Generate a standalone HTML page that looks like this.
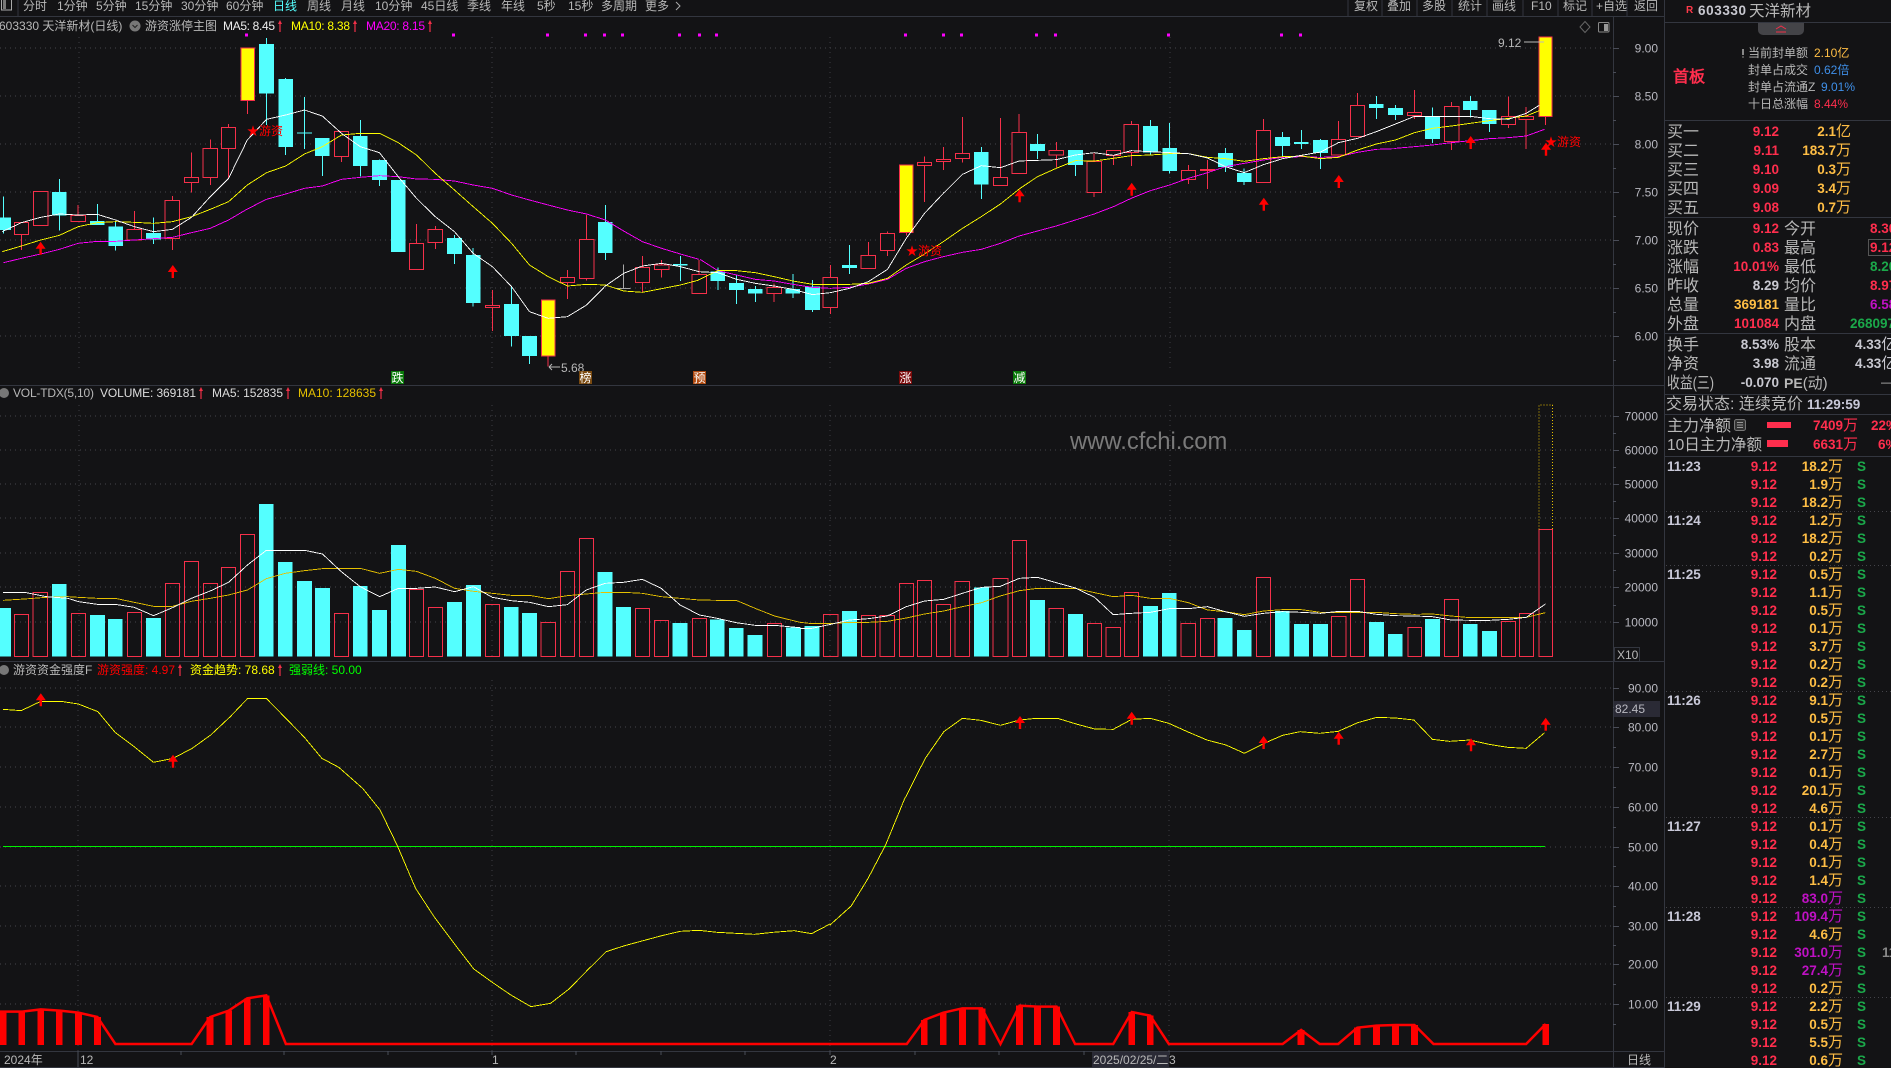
<!DOCTYPE html>
<html><head><meta charset="utf-8"><style>
html,body{margin:0;padding:0;background:#131315;overflow:hidden}
svg{display:block;font-family:"Liberation Sans","WenQuanYi Zen Hei",sans-serif;font-size:12px}
.ns{vector-effect:non-scaling-stroke}
polyline.ns{stroke-width:.9}
polyline.ns.h{stroke-width:2.5}
.n{fill:#b8b8b8}
.a{fill:#b8b8c0;text-anchor:end}
.p{fill:#ff2e4d;font-weight:bold;font-size:13.5px;text-anchor:end}
.v{fill:#ffbe45;font-weight:bold;font-size:13.5px;text-anchor:end}
.m{fill:#bf11c4;font-weight:bold;font-size:13.5px;text-anchor:end}
.w{font-size:15px;font-weight:normal}
.s{fill:#1ba84a;font-weight:bold;font-size:13.5px}
.t{fill:#c8c8d8;font-weight:bold;font-size:13.5px}
.l{fill:#b8b8b8;font-size:16px}
.g{fill:#c8c8d0;font-weight:bold;font-size:13.5px;text-anchor:end}
.e{fill:#1ba84a;font-weight:bold;font-size:13.5px;text-anchor:end}
</style></head><body>
<svg width="1891" height="1068" viewBox="0 0 1891 1068" xmlns="http://www.w3.org/2000/svg">
<defs>
<path id="ar" d="M0 0L5 7H1.2V13H-1.2V7H-5z" fill="#f00"/>
<path id="ta" d="M0 0L2 4H.6V12H-.6V4H-2z" fill="#f03048"/>
</defs>
<rect width="1891" height="1068" fill="#131315"/>

<!-- grid -->
<path d="M0 48H1613M0 96H1613M0 144H1613M0 192H1613M0 240H1613M0 288H1613M0 336H1613M0 416H1613M0 450H1613M0 484H1613M0 518H1613M0 553H1613M0 587H1613M0 622H1613M0 688H1613M0 727H1613M0 767H1613M0 807H1613M0 847H1613M0 886H1613M0 926H1613M0 964H1613M0 1004H1613" stroke="#44444a" stroke-dasharray="1 4" fill="none"/>
<path d="M79 37V370M492 37V370M830 37V370M1170 37V370M79 405V657M492 405V657M830 405V657M1170 405V657M78 680V1051M492 680V1051M830 680V1051M1169 680V1051" stroke="#3c3c42" stroke-dasharray="1 4" fill="none"/>

<!-- magenta dots -->
<path d="M245 33.5h3v3h-3zM452 33.5h3v3h-3zM546 33.5h3v3h-3zM584 33.5h3v3h-3zM603 33.5h3v3h-3zM621 33.5h3v3h-3zM678 33.5h3v3h-3zM698 33.5h3v3h-3zM715 33.5h3v3h-3zM904 33.5h3v3h-3zM942 33.5h3v3h-3zM960 33.5h3v3h-3zM1035 33.5h3v3h-3zM1054 33.5h3v3h-3zM1167 33.5h3v3h-3zM1280 33.5h3v3h-3zM1299 33.5h3v3h-3z" fill="#f0f" shape-rendering="crispEdges"/>

<!-- candles A -->
<g transform="scale(.44643,.33333)" fill="none" shape-rendering="crispEdges">
<path class="ns" stroke="#54ffff" d="M8 590V700M133 537V692M218 612V675M259 665V752M344 652V732M597 114V375M640 234V465M682 291V447M722 414V528M807 360V530M850 478V558M1018 705V792M1060 744V920M1146 860V1040M1186 1068V1092M1356 615V780M1524 768V843"/>
<path stroke="#54ffff" stroke-width="33" d="M8 652V690M133 576V646M218 663V675M259 679V738M344 699V719M597 132V281M640 237V441M682 397V401M722 414V468M807 408V498M850 480V540M892 540V756M1018 714V762M1060 765V909M1146 912V1008M1186 1008V1068M1356 666V759M1524 792V797"/>
<path class="ns" stroke="#f5304a" d="M48 703V750M175 615V647M301 633V688M386 588V750M429 457V578M471 418V555M512 372V535M554 302V342M765 470V486M933 672V730M975 678V747M1103 870V993M1228 1068V1100M1271 810V897M1314 645V842M1439 768V878M1482 780V832M1566 780V823"/>
<path class="ns" fill="#131315" stroke="#f5304a" d="M32 667H64V703H32zM75 574H107V677H75zM159 647H191V665H159zM285 688H317V720H285zM370 601H402V716H370zM413 532H445V548H413zM455 445H487V533H455zM496 382H528V446H496zM749 394H781V470H749zM917 730H949V809H917zM959 688H991V728H959zM1087 916H1119V922H1087zM1255 832H1287V848H1255zM1298 718H1330V836H1298zM1423 802H1455V848H1423zM1466 795H1498V809H1466zM1550 823H1582V881H1550z"/>
<path class="ns" stroke="#a8a8a8" d="M1397 793V865M1380 865H1412"/>
<path class="ns" fill="#ff0" stroke="#f5304a" d="M540 144H570V302H540zM1213 900H1243V1068H1213z"/>
<polyline class="ns" stroke="#f0f" points="8,788 48,775 91,762 133,748 175,730 218,724 259,724 301,720 344,716 386,712 429,698 471,685 512,660 554,627 597,598 640,582 682,565 722,558 765,538 807,532 850,527 892,530 933,537 975,538 1018,543 1060,555 1103,565 1146,585 1186,600 1228,615 1271,630 1314,642 1356,660 1397,693 1439,725 1482,745 1524,762 1566,778"/>
<polyline class="ns" stroke="#ff0" points="5,755 48,738 91,720 133,706 175,680 218,668 259,665 301,667 344,670 386,665 429,650 471,628 512,605 554,555 597,518 640,498 682,462 722,440 765,405 807,400 850,400 892,428 933,465 975,520 1018,570 1060,620 1103,670 1146,730 1186,795 1228,830 1271,858 1314,853 1356,855 1397,873 1439,877 1482,866 1524,855 1566,840"/>
<polyline class="ns" stroke="#fff" points="5,695 48,668 91,652 133,642 175,645 218,643 259,660 301,680 344,695 386,688 429,652 471,590 512,535 554,420 597,358 640,345 682,330 722,348 765,400 807,440 850,458 892,530 933,595 975,650 1018,695 1060,760 1103,800 1146,860 1186,935 1228,955 1271,950 1314,915 1356,858 1397,820 1439,798 1482,790 1524,800 1566,815"/>
</g>

<!-- candles B -->
<g transform="translate(700,0) scale(.44643,.33333)" fill="none" shape-rendering="crispEdges">
<path class="ns" stroke="#54ffff" d="M40 803V870M82 825V912M124 858V906M208 822V894M252 840V936M335 735V822M630 441V597M756 402V477M841 450V528M1009 360V465M1052 369V521M1177 444V516M1219 505V555M1305 396V468M1347 390V447M1390 417V507M1515 288V357M1558 315V360"/>
<path stroke="#54ffff" stroke-width="33" d="M40 814V843M82 849V870M124 867V881M208 867V881M252 860V930M335 795V804M630 456V554M756 432V453M841 450V495M1009 378V458M1052 444V513M1177 459V501M1219 519V546M1305 411V438M1347 426V432M1390 420V459M1515 312V324M1558 324V345"/>
<path class="ns" stroke="#f5304a" d="M166 850V862M166 881V906M292 795V942M377 726V766M420 694V768M462 698V707M503 470V606M545 441V510M588 351V488M673 354V532M715 342V397M798 426V503M883 458V591M926 451V495M966 363V498M1094 495V552M1137 480V567M1262 357V391M1430 363V418M1473 279V316"/>
<path class="ns" fill="#131315" stroke="#f5304a" d="M150 862H182V881H150zM276 832H308V922H276zM361 766H393V806H361zM404 700H436V752H404zM487 487H519V497H487zM530 478H561V485H530zM572 460H604V476H572zM657 532H689V557H657zM699 397H731V521H699zM782 451H814V465H782zM867 485H899V578H867zM910 451H942V467H910zM950 373H982V458H950zM1078 511H1110V539H1078zM1246 391H1278V548H1246zM1414 418H1446V465H1414zM1457 316H1489V410H1457z"/>
<path class="ns" fill="#f5304a" stroke="#f5304a" d="M1121 508H1153V512H1121z"/>
<path class="ns" fill="#ff0" stroke="#f5304a" d="M447 495H477V698H447z"/>
<polyline class="ns" stroke="#f0f" points="0,778 40,812 82,825 124,838 166,843 208,853 252,862 292,865 335,862 377,852 420,838 462,805 503,785 545,770 588,757 630,748 673,730 715,708 756,693 798,678 841,660 883,642 926,620 966,595 1009,572 1052,555 1094,535 1137,518 1177,500 1219,490 1262,480 1305,472 1347,470 1390,472 1430,470 1473,457 1515,448 1558,446"/>
<polyline class="ns" stroke="#ff0" points="-4,840 40,812 82,812 124,818 166,830 208,843 252,853 292,853 335,853 377,850 420,835 462,795 503,762 545,725 588,685 630,650 673,612 715,567 756,530 798,505 841,482 883,483 926,475 966,467 1009,465 1052,461 1094,461 1137,472 1177,476 1219,484 1262,476 1305,470 1347,468 1390,476 1430,472 1473,450 1515,432 1558,420"/>
<polyline class="ns" stroke="#fff" points="-4,815 40,818 82,838 124,850 166,858 208,868 252,884 292,878 335,865 377,845 420,808 462,715 503,640 545,580 588,523 630,497 673,503 715,483 756,481 798,479 841,465 883,458 926,466 966,452 1009,455 1052,458 1094,461 1137,474 1177,500 1219,518 1262,494 1305,476 1347,466 1390,456 1430,428 1473,415 1515,395 1558,372"/>
</g>

<!-- candles C -->
<g transform="translate(1340,0) scale(.35137,.33333)" fill="none" shape-rendering="crispEdges">
<path class="ns" stroke="#54ffff" d="M263 323V429M371 288V353M425 330V396"/>
<path stroke="#54ffff" stroke-width="42" d="M263 350V417M371 303V330M425 330V372"/>
<path class="ns" stroke="#f5304a" d="M212 270V357M317 306V450M479 290V384M530 321V447M585 350V375"/>
<path class="ns" fill="#131315" stroke="#f5304a" d="M192 337H232V347H192zM297 319H338V425H297zM459 349H500V374H459zM510 349H551V358H510z"/>
<path class="ns" fill="#ff0" stroke="#f5304a" d="M566 111H604V350H566z"/>
<polyline class="ns" stroke="#f0f" points="158,445 212,440 263,435 317,428 371,422 425,416 479,413 530,408 582,388"/>
<polyline class="ns" stroke="#ff0" points="158,420 212,398 263,385 317,378 371,370 425,362 479,355 530,348 567,332"/>
<polyline class="ns" stroke="#fff" points="158,372 212,349 263,349 317,349 371,349 425,356 479,358 530,340 567,316"/>
</g>

<!-- arrows pane 1 -->
<use href="#ar" x="40.6" y="241.7"/><use href="#ar" x="172.8" y="265"/><use href="#ar" x="1019.6" y="189.3"/><use href="#ar" x="1131.7" y="182.7"/><use href="#ar" x="1263.8" y="197.7"/><use href="#ar" x="1338.8" y="175"/><use href="#ar" x="1470.7" y="136"/><use href="#ar" x="1546" y="142.7"/>

<!-- star labels -->
<text x="247" y="135" fill="#f00" font-size="12">★游资</text>
<text x="906" y="255" fill="#f00" font-size="12">★游资</text>
<text x="1545" y="146" fill="#f00" font-size="12">★游资</text>

<!-- hi/lo -->
<text x="1498" y="47" class="n">9.12</text><path d="M1524 42H1544" stroke="#b8b8b8" fill="none"/>
<text x="561" y="372" class="n">5.68</text><path d="M549 367H560M549 367l3-3M549 367l3 3" stroke="#b8b8b8" fill="none"/>

<!-- event labels -->
<rect x="391" y="371" width="13" height="13" fill="#0a7a0a"/><text x="391.5" y="382" fill="#fff">跌</text>
<rect x="579" y="371" width="13" height="13" fill="#7a4a10"/><text x="579.5" y="382" fill="#fff">榜</text>
<rect x="693" y="371" width="13" height="13" fill="#b04a10"/><text x="693.5" y="382" fill="#fff">预</text>
<rect x="899" y="371" width="13" height="13" fill="#7a0a0a"/><text x="899.5" y="382" fill="#fff">涨</text>
<rect x="1013" y="371" width="13" height="13" fill="#0a7a0a"/><text x="1013.5" y="382" fill="#fff">减</text>

<!-- volume -->
<g transform="translate(0,380) scale(.5102,.33333)" fill="none" shape-rendering="crispEdges">
<path stroke="#54ffff" stroke-width="29" d="M7 684V830M116 612V830M191 705V830M226 717V830M301 714V830M522 372V830M559 546V830M597 603V830M632 624V830M706 618V830M744 690V830M781 495V830M891 666V830M928 615V830M1002 681V830M1038 699V830M1186 576V830M1222 681V830M1333 729V830M1406 719V830M1443 744V830M1480 765V830M1555 742V830"/>
<path class="ns" stroke="#f5304a" d="M28 703H56V830H28zM65 637H93V830H65zM140 700H168V830H140zM250 697H277V830H250zM324 610H352V830H324zM362 544H389V830H362zM399 610H426V830H399zM434 562H462V830H434zM471 463H499V830H471zM656 700H683V830H656zM803 628H830V830H803zM840 682H867V830H840zM952 673H979V830H952zM1060 727H1089V830H1060zM1099 574H1126V830H1099zM1136 475H1163V830H1136zM1246 685H1273V830H1246zM1283 721H1310V830H1283zM1357 715H1385V830H1357zM1504 730H1532V830H1504z"/>
<polyline class="ns" stroke="#e6c000" points="6,661 48,657 91,652 133,650 154,652 191,655 226,655 263,667 301,679 338,679 375,664 412,655 448,645 485,630 522,596 559,580 597,572 632,566 669,566 706,565 744,580 781,568 816,574 853,595 891,625 928,634 965,640 1002,646 1038,646 1075,656 1112,647 1149,642 1186,637 1222,637 1259,640 1296,650 1333,655 1371,660 1406,661 1443,661 1480,685 1518,708 1568,727"/>
<polyline class="ns" stroke="#fff" points="6,637 48,637 91,650 133,655 154,665 191,673 226,673 263,682 301,707 338,683 375,655 412,633 448,607 485,555 522,511 559,511 597,511 632,522 669,575 706,620 744,650 781,625 816,625 853,621 891,635 928,620 965,652 1002,662 1038,667 1075,680 1112,674 1149,630 1186,610 1222,607 1259,598 1296,625 1333,675 1371,705 1406,715 1443,728 1480,736 1518,736 1568,743"/>
</g>
<g transform="translate(800,380) scale(.54855,.33333)" fill="none" shape-rendering="crispEdges">
<path stroke="#54ffff" stroke-width="27" d="M22 738V830M90 693V830M331 622V830M433 660V830M502 702V830M639 678V830M673 639V830M775 714V830M810 750V830M879 693V830M914 732V830M949 732V830M1051 726V830M1085 762V830M1153 717V830M1222 732V830M1257 753V830"/>
<path class="ns" stroke="#f5304a" d="M43 703H69V830H43zM112 706H138V830H112zM146 706H172V830H146zM181 610H207V830H181zM214 601H240V830H214zM249 673H274V830H249zM283 604H309V830H283zM352 595H379V830H352zM387 482H413V830H387zM454 685H480V830H454zM524 730H550V830H524zM558 742H584V830H558zM592 637H617V830H592zM695 730H721V830H695zM730 715H756V830H730zM832 592H858V830H832zM969 709H995V830H969zM1004 598H1029V830H1004zM1108 742H1133V830H1108zM1175 658H1200V830H1175zM1279 724H1304V830H1279zM1312 700H1337V830H1312zM1347 448H1372V830H1347z"/>
<path class="ns" stroke="#e6c000" stroke-dasharray="1 2" d="M1347 448V75H1372V448"/>
<polyline class="ns" stroke="#e6c000" points="0,727 22,731 56,731 90,727 125,727 159,724 194,714 227,702 262,693 296,680 331,668 365,648 400,632 433,625 467,625 502,625 537,638 571,650 604,646 639,655 673,655 708,668 743,690 775,695 810,704 845,693 879,689 914,689 949,697 982,697 1016,697 1051,697 1085,701 1120,703 1153,702 1187,708 1222,713 1257,713 1291,713 1324,712 1359,698"/>
<polyline class="ns" stroke="#fff" points="0,745 22,745 56,733 90,720 125,716 159,708 194,680 227,663 262,658 296,640 331,622 365,619 400,595 433,592 467,608 502,624 537,652 571,704 604,700 639,697 673,686 708,686 743,680 775,695 810,709 845,700 879,695 914,697 949,700 982,694 1016,694 1051,703 1085,707 1120,708 1153,710 1187,720 1222,721 1257,721 1291,718 1324,712 1359,672"/>
</g>
<text x="1070" y="449" fill="#7a7a7a" font-size="23.8" font-family="Liberation Sans">www.cfchi.com</text>

<!-- indicator -->
<path d="M3 846.5H1545" stroke="#00f000" fill="none" shape-rendering="crispEdges"/>
<g transform="translate(0,660) scale(.52938,.33333)" fill="none" shape-rendering="crispEdges">
<polyline class="ns" stroke="#ff0" points="6,148 40,152 77,124 115,124 148,132 185,155 218,218 255,262 290,307 327,295 363,265 398,225 435,170 468,115 503,115 540,175 575,232 608,295 640,322 685,385 718,450 750,555 785,685 820,770 860,855 895,927 930,967 965,1005 1003,1040 1040,1030 1075,987 1110,930 1145,875 1180,857 1215,842 1250,827 1285,814 1320,811 1355,817 1390,820 1425,823 1460,817 1500,812 1533,821 1568,792"/>
</g>
<g transform="translate(830,660) scale(.52938,.33333)" fill="none" shape-rendering="crispEdges">
<polyline class="ns" stroke="#ff0" points="0,795 40,738 72,655 105,555 140,420 180,295 215,215 250,175 285,181 322,196 358,180 390,175 430,175 465,192 500,207 535,208 570,178 605,175 640,190 675,215 712,240 748,255 783,280 820,250 855,226 888,215 925,220 960,214 997,188 1033,172 1068,174 1103,180 1138,238 1170,244 1208,240 1245,253 1280,262 1315,265 1350,218"/>
</g>
<g transform="translate(0,660) scale(.52938,.33333)" fill="none">
<polyline class="ns h" stroke="#f00" points="0,1055 42,1055 77,1048 113,1052 148,1058 184,1071 218,1152 362,1152 397,1071 432,1052 467,1015 503,1006 540,1152 1568,1152"/>
<path stroke="#f00" stroke-width="13" shape-rendering="crispEdges" d="M6 1055V1155M41 1055V1155M77 1048V1155M112 1052V1155M148 1058V1155M184 1071V1155M397 1071V1155M432 1052V1155M467 1015V1155M503 1006V1155"/>
</g>
<g transform="translate(830,660) scale(.52938,.33333)" fill="none">
<polyline class="ns h" stroke="#f00" points="0,1152 145,1152 178,1080 214,1058 250,1045 287,1045 322,1152 358,1037 392,1040 428,1040 463,1152 535,1152 570,1056 605,1067 640,1152 855,1152 890,1110 925,1152 960,1152 996,1103 1032,1097 1068,1095 1104,1095 1140,1152 1315,1152 1352,1092"/>
<path stroke="#f00" stroke-width="13" shape-rendering="crispEdges" d="M178 1080V1155M214 1058V1155M250 1045V1155M287 1045V1155M358 1037V1155M392 1040V1155M428 1040V1155M570 1056V1155M605 1067V1155M890 1110V1155M996 1103V1155M1032 1097V1155M1068 1095V1155M1104 1095V1155M1352 1092V1155"/>
</g>
<use href="#ar" x="40.8" y="693.3"/><use href="#ar" x="173" y="754.7"/><use href="#ar" x="1020" y="716"/><use href="#ar" x="1131.7" y="711.7"/><use href="#ar" x="1263.6" y="736"/><use href="#ar" x="1338.7" y="731.7"/><use href="#ar" x="1471" y="738.3"/><use href="#ar" x="1545.7" y="717.7"/>

<!-- structural lines -->
<g stroke="#33363f" fill="none" shape-rendering="crispEdges">
<path d="M0 16.5H1664M0 385.5H1664M0 661.5H1664M0 1051.5H1664M0 1067.5H1664"/>
<path d="M1613.5 16V1068M1664.5 0V1068"/>
<path d="M1665 22.5H1891M1665 120.5H1891M1665 217.5H1891M1665 333.5H1891M1665 394.5H1891M1665 414.5H1891M1665 456.5H1891"/>
<path d="M18 0V16M1348 0V16M1382 0V16M1417 0V16M1452 0V16M1487 0V16M1523 0V16M1558 0V16M1592 0V16M1627 0V16"/>
</g>
<path d="M1666 511.5H1891M1666 565.5H1891M1666 691.5H1891M1666 817.5H1891M1666 907.5H1891M1666 997.5H1891" stroke="#44444a" stroke-dasharray="1 3" fill="none" shape-rendering="crispEdges"/>
<g stroke="#4a4d58" fill="none" shape-rendering="crispEdges">
<path d="M1613 48.5h6M1613 96.5h6M1613 144.5h6M1613 192.5h6M1613 240.5h6M1613 288.5h6M1613 336.5h6M1613 72.5h3M1613 120.5h3M1613 168.5h3M1613 216.5h3M1613 264.5h3M1613 312.5h3M1613 360.5h3"/>
<path d="M1613 416.5h6M1613 450.5h6M1613 484.5h6M1613 518.5h6M1613 553.5h6M1613 587.5h6M1613 622.5h6M1613 433.5h3M1613 467.5h3M1613 501.5h3M1613 535.5h3M1613 570.5h3M1613 605.5h3"/>
<path d="M1613 688.5h6M1613 727.5h6M1613 767.5h6M1613 807.5h6M1613 847.5h6M1613 886.5h6M1613 926.5h6M1613 964.5h6M1613 1004.5h6M1613 707.5h3M1613 747.5h3M1613 787.5h3M1613 827.5h3M1613 866.5h3M1613 906.5h3M1613 945.5h3M1613 984.5h3M1613 1024.5h3"/>
<path d="M78 1051v16M181 1051v4M284 1051v4M388 1051v4M492 1051v4M576 1051v4M661 1051v4M745 1051v4M830 1051v4M915 1051v4M999 1051v4M1084 1051v4M1169 1051v4"/>
</g>

<!-- top tabs -->
<rect x="1.5" y="-2" width="10" height="12" fill="none" stroke="#aaa"/><rect x="3" y="0" width="3" height="9" fill="#777"/>
<g class="n">
<text x="23" y="10" class="n">分时</text><text x="57" y="10" class="n">1分钟</text><text x="96" y="10" class="n">5分钟</text><text x="135" y="10" class="n">15分钟</text><text x="181" y="10" class="n">30分钟</text><text x="226" y="10" class="n">60分钟</text><text x="273" y="10" fill="#5ff">日线</text><text x="307" y="10" class="n">周线</text><text x="341" y="10" class="n">月线</text><text x="375" y="10" class="n">10分钟</text><text x="421" y="10" class="n">45日线</text><text x="467" y="10" class="n">季线</text><text x="501" y="10" class="n">年线</text><text x="537" y="10" class="n">5秒</text><text x="568" y="10" class="n">15秒</text><text x="601" y="10" class="n">多周期</text><text x="645" y="10" class="n">更多</text>
<text x="1354" y="10" class="n">复权</text><text x="1387" y="10" class="n">叠加</text><text x="1422" y="10" class="n">多股</text><text x="1458" y="10" class="n">统计</text><text x="1492" y="10" class="n">画线</text><text x="1531" y="10" class="n">F10</text><text x="1563" y="10" class="n">标记</text><text x="1596" y="10" class="n">+自选</text><text x="1634" y="10" class="n">返回</text>
</g>
<path d="M676 2l4 4-4 4" stroke="#aaa" fill="none"/>

<!-- title row -->
<text x="-1" y="30" class="n">603330 天洋新材(日线)</text>
<circle cx="135" cy="26" r="5.5" fill="#777"/><path d="M132.5 25l2.5 2.5 2.5-2.5" stroke="#222" fill="none"/>
<text x="145" y="30" class="n">游资涨停主图</text>
<text x="223" y="30" fill="#eee" textLength="52">MA5: 8.45</text><use href="#ta" x="280" y="20"/>
<text x="291" y="30" fill="#ff0" textLength="59">MA10: 8.38</text><use href="#ta" x="355" y="20"/>
<text x="366" y="30" fill="#f0f" textLength="59">MA20: 8.15</text><use href="#ta" x="430" y="20"/>
<path d="M1585 21.5l5 5.5-5 5.5-5-5.5z" stroke="#666" fill="none"/>
<rect x="1598.5" y="22.5" width="10.5" height="9.5" rx="1" fill="none" stroke="#888"/><rect x="1604" y="24" width="4" height="7" fill="#999"/>

<!-- vol title -->
<circle cx="4" cy="393" r="5" fill="#777"/>
<text x="13" y="397" class="n" textLength="81">VOL-TDX(5,10)</text>
<text x="100" y="397" fill="#ddd" textLength="96">VOLUME: 369181</text><use href="#ta" x="201" y="387"/>
<text x="212" y="397" fill="#ddd" textLength="71">MA5: 152835</text><use href="#ta" x="288" y="387"/>
<text x="298" y="397" fill="#e6c000" textLength="78">MA10: 128635</text><use href="#ta" x="381" y="387"/>

<!-- ind title -->
<circle cx="4" cy="670" r="5" fill="#777"/>
<text x="13" y="674" class="n">游资资金强度F</text>
<text x="97" y="674" fill="#f00">游资强度: 4.97</text><use href="#ta" x="180" y="664"/>
<text x="190" y="674" fill="#ff0">资金趋势: 78.68</text><use href="#ta" x="280" y="664"/>
<text x="289" y="674" fill="#0f0">强弱线: 50.00</text>

<!-- axes text -->
<text x="1658" y="52.5" class="a">9.00</text><text x="1658" y="100.5" class="a">8.50</text><text x="1658" y="148.5" class="a">8.00</text><text x="1658" y="196.5" class="a">7.50</text><text x="1658" y="244.5" class="a">7.00</text><text x="1658" y="292.5" class="a">6.50</text><text x="1658" y="340.5" class="a">6.00</text>
<text x="1658" y="420.5" class="a">70000</text><text x="1658" y="454.5" class="a">60000</text><text x="1658" y="488.5" class="a">50000</text><text x="1658" y="522.5" class="a">40000</text><text x="1658" y="557.5" class="a">30000</text><text x="1658" y="591.5" class="a">20000</text><text x="1658" y="626.5" class="a">10000</text>
<rect x="1614.5" y="647.5" width="25" height="14" fill="#131315" stroke="#33363f"/><text x="1617" y="659" class="n">X10</text>
<text x="1658" y="692.5" class="a">90.00</text><text x="1658" y="731.5" class="a">80.00</text><text x="1658" y="771.5" class="a">70.00</text><text x="1658" y="811.5" class="a">60.00</text><text x="1658" y="851.5" class="a">50.00</text><text x="1658" y="890.5" class="a">40.00</text><text x="1658" y="930.5" class="a">30.00</text><text x="1658" y="968.5" class="a">20.00</text><text x="1658" y="1008.5" class="a">10.00</text>
<rect x="1614" y="701" width="46" height="16" fill="#2a2a35"/><text x="1615" y="713" fill="#b8b8c0">82.45</text>

<!-- bottom axis -->
<text x="4" y="1064" class="n">2024年</text><text x="80" y="1064" class="n">12</text><text x="492" y="1064" class="n">1</text><text x="830" y="1064" class="n">2</text>
<rect x="1092" y="1052" width="77" height="15" fill="#2a2a35"/><text x="1093" y="1064" class="n">2025/02/25/二</text><text x="1169" y="1064" class="n">3</text>
<text x="1627" y="1064" class="n">日线</text>

<!-- right header -->
<text x="1686" y="13" fill="#ff3a4a" font-weight="bold" font-size="10">R</text>
<text x="1698" y="15" fill="#c8c8d0" font-weight="bold" font-size="13.5" letter-spacing=".6">603330</text>
<text x="1749" y="16" fill="#b8b8b8" font-size="15.5">天洋新材</text>
<path d="M1758 23H1804V30a5 5 0 0 1-5 5H1763a5 5 0 0 1-5-5z" fill="#444448"/>
<path d="M1776 29l5-3 5 3M1776 32h10" stroke="#f03048" fill="none"/>
<text x="1673" y="82" fill="#ff2e4d" font-size="16" font-weight="bold">首板</text>
<rect x="1742" y="49" width="2" height="6" fill="#888"/><rect x="1742.5" y="56" width="1" height="2" fill="#888"/>
<text x="1748" y="57" class="n">当前封单额</text><text x="1814" y="57" fill="#ffbe45">2.10亿</text>
<text x="1748" y="74" class="n">封单占成交</text><text x="1814" y="74" fill="#3f8fe8">0.62倍</text>
<text x="1748" y="91" class="n">封单占流通Z</text><text x="1821" y="91" fill="#3f8fe8">9.01%</text>
<text x="1748" y="108" class="n">十日总涨幅</text><text x="1814" y="108" fill="#ff2e4d">8.44%</text>

<!-- order book -->
<text x="1667" y="137" class="l">买一</text><text x="1667" y="156" class="l">买二</text><text x="1667" y="175" class="l">买三</text><text x="1667" y="194" class="l">买四</text><text x="1667" y="213" class="l">买五</text>
<text x="1779" y="136" class="p">9.12</text><text x="1779" y="155" class="p">9.11</text><text x="1779" y="174" class="p">9.10</text><text x="1779" y="193" class="p">9.09</text><text x="1779" y="212" class="p">9.08</text>
<text x="1851" y="136" class="v">2.1<tspan class="w">亿</tspan></text><text x="1851" y="155" class="v">183.7<tspan class="w">万</tspan></text><text x="1851" y="174" class="v">0.3<tspan class="w">万</tspan></text><text x="1851" y="193" class="v">3.4<tspan class="w">万</tspan></text><text x="1851" y="212" class="v">0.7<tspan class="w">万</tspan></text>

<!-- quote -->
<text x="1667" y="234" class="l">现价</text><text x="1667" y="253" class="l">涨跌</text><text x="1667" y="272" class="l">涨幅</text><text x="1667" y="291" class="l">昨收</text><text x="1667" y="310" class="l">总量</text><text x="1667" y="329" class="l">外盘</text>
<text x="1784" y="234" class="l">今开</text><text x="1784" y="253" class="l">最高</text><text x="1784" y="272" class="l">最低</text><text x="1784" y="291" class="l">均价</text><text x="1784" y="310" class="l">量比</text><text x="1784" y="329" class="l">内盘</text>
<text x="1779" y="233" class="p">9.12</text><text x="1779" y="252" class="p">0.83</text><text x="1779" y="271" class="p">10.01%</text><text x="1779" y="290" class="g">8.29</text><text x="1779" y="309" class="v">369181</text><text x="1779" y="328" class="p">101084</text>
<rect x="1868.5" y="239.5" width="30" height="16" fill="none" stroke="#555"/>
<text x="1870" y="233" class="p" style="text-anchor:start">8.30</text><text x="1870" y="252" class="p" style="text-anchor:start">9.12</text><text x="1870" y="271" class="e" style="text-anchor:start">8.20</text><text x="1870" y="290" class="p" style="text-anchor:start">8.97</text><text x="1870" y="309" class="m" style="text-anchor:start">6.58</text><text x="1850" y="328" class="e" style="text-anchor:start">268097</text>
<text x="1667" y="350" class="l">换手</text><text x="1667" y="369" class="l">净资</text><text x="1667" y="388" class="l" textLength="47" lengthAdjust="spacingAndGlyphs">收益(三)</text>
<text x="1784" y="350" class="l">股本</text><text x="1784" y="369" class="l">流通</text>
<text x="1784" y="388" fill="#b8b8b8" font-size="14" font-weight="bold">PE<tspan font-weight="normal" font-size="15">(动)</tspan></text>
<text x="1779" y="349" class="g">8.53%</text><text x="1779" y="368" class="g">3.98</text><text x="1779" y="387" class="g">-0.070</text>
<text x="1855" y="349" class="g" style="text-anchor:start">4.33<tspan class="w">亿</tspan></text><text x="1855" y="368" class="g" style="text-anchor:start">4.33<tspan class="w">亿</tspan></text><text x="1881" y="386" class="n">—</text>

<!-- state -->
<text x="1666" y="409" class="l" font-size="15">交易状态: 连续竞价</text><text x="1807" y="409" fill="#c8c8d8" font-weight="bold" font-size="13.5">11:29:59</text>
<text x="1667" y="431" class="l">主力净额</text>
<rect x="1734.5" y="419.5" width="11" height="11" rx="2" fill="#333" stroke="#777"/><path d="M1737 422.5h6M1737 425h6M1737 427.5h6" stroke="#999" fill="none"/>
<rect x="1767" y="422" width="24" height="6" fill="#ff2e4d"/>
<text x="1858" y="430" class="p">7409<tspan class="w">万</tspan></text><text x="1871" y="430" fill="#ff2e4d" font-weight="bold" font-size="13.5">22%</text>
<text x="1667" y="450" class="l" textLength="95" lengthAdjust="spacingAndGlyphs">10日主力净额</text>
<rect x="1767" y="440" width="21" height="7" fill="#ff2e4d"/>
<text x="1858" y="449" class="p">6631<tspan class="w">万</tspan></text><text x="1878" y="449" fill="#ff2e4d" font-weight="bold" font-size="13.5">6%</text>

<!-- ticks: time -->
<text x="1667" y="471" class="t">11:23</text><text x="1667" y="525" class="t">11:24</text><text x="1667" y="579" class="t">11:25</text><text x="1667" y="705" class="t">11:26</text><text x="1667" y="831" class="t">11:27</text><text x="1667" y="921" class="t">11:28</text><text x="1667" y="1011" class="t">11:29</text>
<!-- ticks: price -->
<text x="1777" y="471" class="p">9.12</text><text x="1777" y="489" class="p">9.12</text><text x="1777" y="507" class="p">9.12</text><text x="1777" y="525" class="p">9.12</text><text x="1777" y="543" class="p">9.12</text><text x="1777" y="561" class="p">9.12</text><text x="1777" y="579" class="p">9.12</text><text x="1777" y="597" class="p">9.12</text><text x="1777" y="615" class="p">9.12</text><text x="1777" y="633" class="p">9.12</text><text x="1777" y="651" class="p">9.12</text><text x="1777" y="669" class="p">9.12</text><text x="1777" y="687" class="p">9.12</text><text x="1777" y="705" class="p">9.12</text><text x="1777" y="723" class="p">9.12</text><text x="1777" y="741" class="p">9.12</text><text x="1777" y="759" class="p">9.12</text><text x="1777" y="777" class="p">9.12</text><text x="1777" y="795" class="p">9.12</text><text x="1777" y="813" class="p">9.12</text><text x="1777" y="831" class="p">9.12</text><text x="1777" y="849" class="p">9.12</text><text x="1777" y="867" class="p">9.12</text><text x="1777" y="885" class="p">9.12</text><text x="1777" y="903" class="p">9.12</text><text x="1777" y="921" class="p">9.12</text><text x="1777" y="939" class="p">9.12</text><text x="1777" y="957" class="p">9.12</text><text x="1777" y="975" class="p">9.12</text><text x="1777" y="993" class="p">9.12</text><text x="1777" y="1011" class="p">9.12</text><text x="1777" y="1029" class="p">9.12</text><text x="1777" y="1047" class="p">9.12</text><text x="1777" y="1065" class="p">9.12</text>
<!-- ticks: volume -->
<text x="1843" y="471" class="v">18.2<tspan class="w">万</tspan></text><text x="1843" y="489" class="v">1.9<tspan class="w">万</tspan></text><text x="1843" y="507" class="v">18.2<tspan class="w">万</tspan></text><text x="1843" y="525" class="v">1.2<tspan class="w">万</tspan></text><text x="1843" y="543" class="v">18.2<tspan class="w">万</tspan></text><text x="1843" y="561" class="v">0.2<tspan class="w">万</tspan></text><text x="1843" y="579" class="v">0.5<tspan class="w">万</tspan></text><text x="1843" y="597" class="v">1.1<tspan class="w">万</tspan></text><text x="1843" y="615" class="v">0.5<tspan class="w">万</tspan></text><text x="1843" y="633" class="v">0.1<tspan class="w">万</tspan></text><text x="1843" y="651" class="v">3.7<tspan class="w">万</tspan></text><text x="1843" y="669" class="v">0.2<tspan class="w">万</tspan></text><text x="1843" y="687" class="v">0.2<tspan class="w">万</tspan></text><text x="1843" y="705" class="v">9.1<tspan class="w">万</tspan></text><text x="1843" y="723" class="v">0.5<tspan class="w">万</tspan></text><text x="1843" y="741" class="v">0.1<tspan class="w">万</tspan></text><text x="1843" y="759" class="v">2.7<tspan class="w">万</tspan></text><text x="1843" y="777" class="v">0.1<tspan class="w">万</tspan></text><text x="1843" y="795" class="v">20.1<tspan class="w">万</tspan></text><text x="1843" y="813" class="v">4.6<tspan class="w">万</tspan></text><text x="1843" y="831" class="v">0.1<tspan class="w">万</tspan></text><text x="1843" y="849" class="v">0.4<tspan class="w">万</tspan></text><text x="1843" y="867" class="v">0.1<tspan class="w">万</tspan></text><text x="1843" y="885" class="v">1.4<tspan class="w">万</tspan></text><text x="1843" y="903" class="m">83.0<tspan class="w">万</tspan></text><text x="1843" y="921" class="m">109.4<tspan class="w">万</tspan></text><text x="1843" y="939" class="v">4.6<tspan class="w">万</tspan></text><text x="1843" y="957" class="m">301.0<tspan class="w">万</tspan></text><text x="1843" y="975" class="m">27.4<tspan class="w">万</tspan></text><text x="1843" y="993" class="v">0.2<tspan class="w">万</tspan></text><text x="1843" y="1011" class="v">2.2<tspan class="w">万</tspan></text><text x="1843" y="1029" class="v">0.5<tspan class="w">万</tspan></text><text x="1843" y="1047" class="v">5.5<tspan class="w">万</tspan></text><text x="1843" y="1065" class="v">0.6<tspan class="w">万</tspan></text>
<!-- ticks: S -->
<text x="1857" y="471" class="s">S</text><text x="1857" y="489" class="s">S</text><text x="1857" y="507" class="s">S</text><text x="1857" y="525" class="s">S</text><text x="1857" y="543" class="s">S</text><text x="1857" y="561" class="s">S</text><text x="1857" y="579" class="s">S</text><text x="1857" y="597" class="s">S</text><text x="1857" y="615" class="s">S</text><text x="1857" y="633" class="s">S</text><text x="1857" y="651" class="s">S</text><text x="1857" y="669" class="s">S</text><text x="1857" y="687" class="s">S</text><text x="1857" y="705" class="s">S</text><text x="1857" y="723" class="s">S</text><text x="1857" y="741" class="s">S</text><text x="1857" y="759" class="s">S</text><text x="1857" y="777" class="s">S</text><text x="1857" y="795" class="s">S</text><text x="1857" y="813" class="s">S</text><text x="1857" y="831" class="s">S</text><text x="1857" y="849" class="s">S</text><text x="1857" y="867" class="s">S</text><text x="1857" y="885" class="s">S</text><text x="1857" y="903" class="s">S</text><text x="1857" y="921" class="s">S</text><text x="1857" y="939" class="s">S</text><text x="1857" y="957" class="s">S</text><text x="1857" y="975" class="s">S</text><text x="1857" y="993" class="s">S</text><text x="1857" y="1011" class="s">S</text><text x="1857" y="1029" class="s">S</text><text x="1857" y="1047" class="s">S</text><text x="1857" y="1065" class="s">S</text>
<text x="1882" y="957" fill="#888" font-weight="bold" font-size="13.5">11</text>
</svg>
</body></html>
